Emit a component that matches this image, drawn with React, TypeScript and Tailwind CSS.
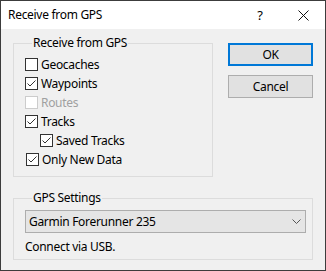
import React from "react";

const font = { fontFamily: '"Segoe UI", "Noto Sans", "Open Sans", sans-serif', letterSpacing: "-0.3px" };

function Check({ checked, disabled }: { checked?: boolean; disabled?: boolean }) {
  return (
    <span
      className={`w-[13px] h-[13px] border flex items-center justify-center shrink-0 ${
        disabled ? "border-[#cccccc] bg-white" : "border-[#333333] bg-white"
      }`}
    >
      {checked && (
        <svg width="11" height="11" viewBox="0 0 11 11">
          <path d="M1.5 5.5 L4 8 L9.5 2.5" fill="none" stroke="#333333" strokeWidth="1" />
        </svg>
      )}
    </span>
  );
}

function Row({
  label,
  checked,
  disabled,
  indent,
}: {
  label: string;
  checked?: boolean;
  disabled?: boolean;
  indent?: string;
}) {
  return (
    <div className={`h-[19px] flex items-center gap-[3px] ${indent ?? ""}`}>
      <Check checked={checked} disabled={disabled} />
      <span className={disabled ? "text-[#a0a0a0]" : "text-black"}>{label}</span>
    </div>
  );
}

export default function App() {
  return (
    <div
      className="w-[326px] h-[271px] border border-[#3c3c3c] bg-[#f0f0f0] flex flex-col text-[12px] leading-[16px] text-black"
      style={font}
    >
      <div className="h-[28px] bg-white flex items-center pl-[7px] shrink-0">
        <span className="flex-1">Receive from GPS</span>
        <span className="w-[20px] text-center mr-[28px] text-[13px]">?</span>
        <svg width="11" height="11" viewBox="0 0 11 11" className="mr-[16px]">
          <path d="M0.5 0.5 L10.5 10.5 M10.5 0.5 L0.5 10.5" stroke="#111" strokeWidth="1" />
        </svg>
      </div>
      <div className="flex-1 flex flex-col px-[12px] pt-[6px]">
        <div className="flex justify-between">
          <fieldset className="w-[200px] h-[142px] border border-[#dcdcdc] pl-[11px] pt-[4px] m-0">
            <legend className="ml-[7px] px-[1px]">Receive from GPS</legend>
            <Row label="Geocaches" />
            <Row label="Waypoints" checked />
            <Row label="Routes" disabled />
            <Row label="Tracks" checked />
            <Row label="Saved Tracks" checked indent="ml-[15px]" />
            <Row label="Only New Data" checked indent="ml-[1px]" />
          </fieldset>
          <div className="flex flex-col gap-[9px] pt-[8px]">
            <button className="w-[85px] h-[23px] border-2 border-[#0078d7] bg-[#e1e1e1] flex items-center justify-center">
              OK
            </button>
            <button className="w-[85px] h-[23px] border border-[#adadad] bg-[#e1e1e1] flex items-center justify-center">
              Cancel
            </button>
          </div>
        </div>
        <fieldset className="mt-[13px] w-[300px] h-[70px] border border-[#dcdcdc] pl-[11px] pr-[6px] pt-[4px] m-0">
          <legend className="ml-[7px] px-[1px]">GPS Settings</legend>
          <div className="h-[23px] border border-[#adadad] bg-[#e5e5e5] flex items-center pl-[3px] pr-[4px]">
            <span className="flex-1">Garmin Forerunner 235</span>
            <svg width="9" height="5" viewBox="0 0 9 5">
              <path d="M0.5 0.5 L4.5 4.5 L8.5 0.5" fill="none" stroke="#555" strokeWidth="1" />
            </svg>
          </div>
          <div className="mt-[6px]">Connect via USB.</div>
        </fieldset>
      </div>
    </div>
  );
}
